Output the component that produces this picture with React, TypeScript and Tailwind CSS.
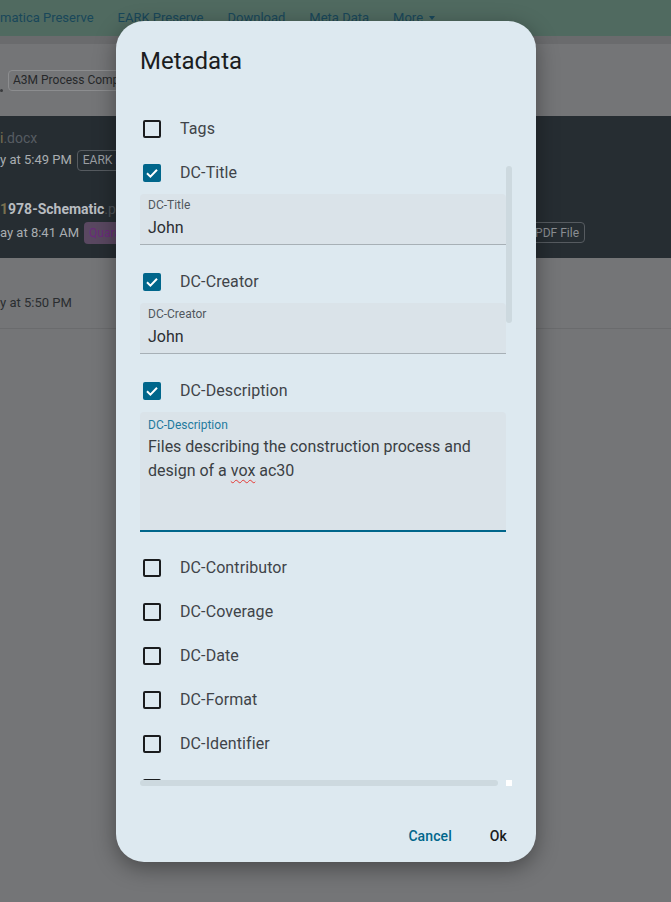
import React from "react";

const font = { fontFamily: "Roboto, 'Noto Sans', Arial, sans-serif" };

function Box({ checked }: { checked: boolean }) {
  if (checked) {
    return (
      <div className="w-[18px] h-[18px] rounded-[2px] bg-[#00668b] flex items-center justify-center shrink-0">
        <svg width="18" height="18" viewBox="0 0 18 18">
          <path d="M4 9.3 L7.4 12.6 L14 5.8" fill="none" stroke="#ffffff" strokeWidth="2" />
        </svg>
      </div>
    );
  }
  return <div className="w-[18px] h-[18px] rounded-[2px] border-2 border-[#1a1c1e] shrink-0" />;
}

function Row({ label, checked }: { label: string; checked?: boolean }) {
  return (
    <div className="h-[44px] flex items-center pl-[3px] gap-[19px]">
      <Box checked={!!checked} />
      <span className="text-[16px] text-[#3f4449] tracking-[0.1px]">{label}</span>
    </div>
  );
}

function Field({ label, value }: { label: string; value: string }) {
  return (
    <div className="h-[51px] -mt-[1px] bg-[#dae3e9] border-b border-[#a7b0b6] pl-[8px] pt-[3px] mb-[15px] rounded-t-[4px]">
      <div className="text-[12px] leading-[16px] text-[#50575d]">{label}</div>
      <div className="text-[16px] leading-[24px] mt-[3px] text-[#2a2e32]">{value}</div>
    </div>
  );
}

export default function App() {
  return (
    <div className="relative w-[671px] h-[902px] overflow-hidden bg-[#747577]" style={font}>
      {/* background page */}
      <div className="h-[36px] bg-[#506a60] flex items-center gap-[24px] text-[13px] text-[#19475a]">
        <span>matica Preserve</span>
        <span>EARK Preserve</span>
        <span>Download</span>
        <span>Meta Data</span>
        <span className="flex items-center gap-[6px]">
          More
          <span className="w-0 h-0 border-l-[3px] border-r-[3px] border-t-[4px] border-l-transparent border-r-transparent border-t-[#19475a]" />
        </span>
      </div>
      <div className="h-[8px] bg-[#6a6b6d]" />
      <div className="h-[72px] flex items-center pl-[8px] relative">
        <span className="absolute left-0 top-[45px] w-[3px] h-[3px] rounded-full bg-[#3a3b3d]" />
        <span className="h-[21px] px-[4px] border border-[#8c8d8f] rounded-[4px] text-[12px] text-[#26282a] flex items-center whitespace-nowrap">
          A3M Process Completed
        </span>
      </div>
      <div className="h-[142px] bg-[#262d32] text-[13px]">
        <div className="pt-[12px] h-[71px]">
          <div className="h-[20px] leading-[20px] text-[14px] whitespace-nowrap">
            <span className="text-[#7a7150]">i</span>
            <span className="text-[#565c62]">.docx</span>
          </div>
          <div className="h-[22px] mt-[1px] flex items-center gap-[5px] whitespace-nowrap">
            <span className="text-[#a9adb1] text-[13px]">y at 5:49 PM</span>
            <span className="h-[21px] px-[5px] border border-[#565b60] rounded-[4px] text-[12px] text-[#9a9ea2] flex items-center">
              EARK Preserved
            </span>
          </div>
        </div>
        <div className="pt-[12px] h-[71px] flex justify-between">
          <div>
            <div className="h-[20px] leading-[20px] text-[14px] whitespace-nowrap">
              <span className="text-[#7a7150] font-bold">1</span>
              <span className="text-[#b8bcc0] font-bold">978-Schematic</span>
              <span className="text-[#4d5257]">.pdf</span>
            </div>
            <div className="h-[22px] mt-[3px] flex items-center gap-[5px] whitespace-nowrap">
              <span className="text-[#a9adb1] text-[13px]">ay at 8:41 AM</span>
              <span className="h-[22px] px-[5px] bg-[#5a4861] rounded-[4px] text-[12px] text-[#6b2a7c] flex items-center">
                Quarantined
              </span>
            </div>
          </div>
          <div className="pt-[23px] pr-[86px]">
            <span className="h-[21px] px-[5px] border border-[#565b60] rounded-[4px] text-[12px] text-[#8a8e92] flex items-center whitespace-nowrap">
              PDF File
            </span>
          </div>
        </div>
      </div>
      <div className="h-[71px] border-b border-[#6a6b6d] flex items-center text-[13px] text-[#2a2d30]">
        <span className="mt-[19px]">y at 5:50 PM</span>
      </div>

      {/* dialog */}
      <div className="absolute left-[116px] top-[21px] w-[420px] h-[841px] rounded-[28px] bg-[#dde9f0] shadow-[0_6px_22px_rgba(0,0,0,0.38)] flex flex-col pt-[24px] pb-[6px]">
        <div className="px-[24px] h-[32px] text-[24px] leading-[32px] text-[#1b1d1f]">Metadata</div>
        <div className="ml-[24px] mt-[23px] w-[372px] flex flex-col">
          <div className="h-[680px] flex">
            <div className="w-[366px] overflow-hidden pt-[7px]">
              <Row label="Tags" />
              <Row label="DC-Title" checked />
              <Field label="DC-Title" value="John" />
              <Row label="DC-Creator" checked />
              <Field label="DC-Creator" value="John" />
              <Row label="DC-Description" checked />
              <div className="h-[120px] -mt-[1px] bg-[#dae3e9] border-b-2 border-[#00668b] pl-[8px] pt-[5px] mb-[14px] rounded-t-[4px]">
                <div className="text-[12px] leading-[16px] text-[#1f7a9e]">DC-Description</div>
                <div className="text-[16px] leading-[24px] mt-[2px] text-[#3a3f44]">
                  Files describing the construction process and
                  <br />
                  design of a{" "}
                  <span className="underline decoration-wavy decoration-[#e53935] decoration-1 underline-offset-[3px]">vox</span>{" "}
                  ac30
                </div>
              </div>
              <Row label="DC-Contributor" />
              <Row label="DC-Coverage" />
              <Row label="DC-Date" />
              <Row label="DC-Format" />
              <Row label="DC-Identifier" />
              <Row label="DC-Language" />
            </div>
            <div className="w-[6px]">
              <div className="mt-[66px] h-[157px] w-[6px] rounded-full bg-[#cdd9df]" />
            </div>
          </div>
          <div className="h-[6px] flex justify-between">
            <div className="w-[358px] h-[6px] rounded-full bg-[#cdd9df]" />
            <div className="w-[6px] h-[6px] bg-white" />
          </div>
        </div>
        <div className="mt-[30px] h-[40px] flex justify-end items-center gap-[14px] pr-[17px] text-[14px] font-medium tracking-[0.1px]">
          <button className="h-[40px] px-[12px] text-[#00668b]">Cancel</button>
          <button className="h-[40px] px-[12px] text-[#1a1c1e]">Ok</button>
        </div>
      </div>
    </div>
  );
}
